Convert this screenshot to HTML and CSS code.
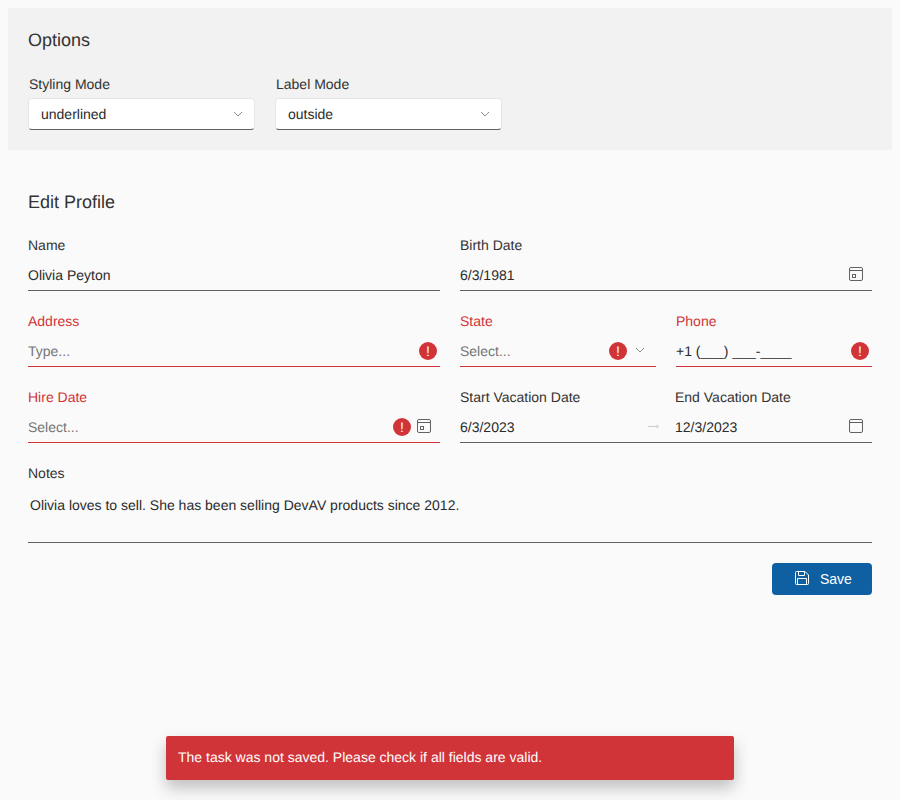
FILE: index.html
```html
<!DOCTYPE html>
<html lang="en">
<head>
    <meta charset="UTF-8">
    <meta name="viewport" content="width=device-width, initial-scale=1.0">
    <title>Edit Profile</title>
    <link rel="stylesheet" href="styles.css">
</head>
<body>
    <svg class="defs" width="0" height="0" aria-hidden="true">
        <symbol id="chevron" viewBox="0 0 12 12"><path d="M2 4 6 8l4-4" fill="none" stroke="currentColor"/></symbol>
        <symbol id="cal-today" viewBox="0 0 16 16"><rect x="1.500" y="1.500" width="13" height="13" rx="1.500" fill="none" stroke="currentColor"/><path d="M1.500 4.500h13" stroke="currentColor"/><rect x="4.500" y="8.500" width="3" height="3" fill="none" stroke="currentColor"/></symbol>
        <symbol id="cal" viewBox="0 0 16 16"><rect x="1.500" y="1.500" width="13" height="13" rx="1.500" fill="none" stroke="currentColor"/><path d="M1.500 4.500h13" stroke="currentColor"/></symbol>
    </svg>

    <section class="options">
        <h2 class="title">Options</h2>
        <div class="options-row">
            <div class="option">
                <div class="option-label">Styling Mode</div>
                <div class="select-box">
                    <span>underlined</span>
                    <svg class="icon-chevron"><use href="#chevron"/></svg>
                </div>
            </div>
            <div class="option">
                <div class="option-label">Label Mode</div>
                <div class="select-box">
                    <span>outside</span>
                    <svg class="icon-chevron"><use href="#chevron"/></svg>
                </div>
            </div>
        </div>
    </section>

    <form class="profile">
        <h2 class="title">Edit Profile</h2>
        <div class="grid">
            <div class="field">
                <div class="label">Name</div>
                <div class="input"><span class="value">Olivia Peyton</span></div>
            </div>
            <div class="field">
                <div class="label">Birth Date</div>
                <div class="input">
                    <span class="value">6/3/1981</span>
                    <svg class="icon-cal"><use href="#cal-today"/></svg>
                </div>
            </div>

            <div class="field invalid">
                <div class="label">Address</div>
                <div class="input">
                    <span class="value placeholder">Type...</span>
                    <span class="error end">!</span>
                </div>
            </div>
            <div class="split">
                <div class="field invalid">
                    <div class="label">State</div>
                    <div class="input">
                        <span class="value placeholder">Select...</span>
                        <span class="error">!</span>
                        <svg class="icon-chevron state-chevron"><use href="#chevron"/></svg>
                    </div>
                </div>
                <div class="field invalid">
                    <div class="label">Phone</div>
                    <div class="input">
                        <span class="value">+1 (___) ___-____</span>
                        <span class="error end">!</span>
                    </div>
                </div>
            </div>

            <div class="field invalid">
                <div class="label">Hire Date</div>
                <div class="input">
                    <span class="value placeholder">Select...</span>
                    <span class="error">!</span>
                    <svg class="icon-cal hire-cal"><use href="#cal-today"/></svg>
                </div>
            </div>
            <div class="range">
                <div class="range-labels">
                    <div class="label">Start Vacation Date</div>
                    <div class="label">End Vacation Date</div>
                </div>
                <div class="input range-input">
                    <span class="value">6/3/2023</span>
                    <svg class="icon-arrow" viewBox="0 0 12 6"><path d="M0 3.500h10M8.500 2 10.500 3.500 8.500 5" fill="none" stroke="currentColor"/></svg>
                    <span class="value">12/3/2023</span>
                    <svg class="icon-cal"><use href="#cal"/></svg>
                </div>
            </div>

            <div class="field wide">
                <div class="label">Notes</div>
                <div class="textarea">Olivia loves to sell. She has been selling DevAV products since 2012.</div>
            </div>
        </div>

        <div class="actions">
            <button type="button" class="save">
                <svg class="icon-save" viewBox="0 0 16 16"><path d="M1.500 2.500a1 1 0 0 1 1-1h8.500l3.500 3.500v8.500a1 1 0 0 1-1 1h-11a1 1 0 0 1-1-1z" fill="none" stroke="currentColor"/><path d="M4.500 1.500v4h6v-4M3.500 14.500v-6h9v6" fill="none" stroke="currentColor"/></svg>
                Save
            </button>
        </div>
    </form>

    <div class="toast">The task was not saved. Please check if all fields are valid.</div>
</body>
</html>
```

FILE: styles.css
```css
* {
    box-sizing: border-box;
}
html, body {
    height: 100%;
}
body {
    margin: 0;
    background: #fafafa;
    color: #2b2b2b;
    font-family: "Liberation Sans", Arial, sans-serif;
    font-size: 14px;
    line-height: 20px;
    text-rendering: geometricPrecision;
}
.defs {
    position: absolute;
}
.title {
    margin: 0;
    font-size: 18px;
    font-weight: 400;
    line-height: 24px;
    color: #333;
}
.options {
    margin: 8px 8px 0;
    height: 142px;
    padding: 20px;
    background: #f2f2f2;
}
.options-row {
    display: flex;
    gap: 20px;
    margin-top: 22px;
}
.option {
    width: 227px;
}
.option-label {
    padding-left: 1px;
    height: 24px;
    line-height: 20px;
    color: #333;
}
.select-box {
    display: flex;
    align-items: center;
    justify-content: space-between;
    height: 32px;
    padding: 0 10px 0 12px;
    background: #fff;
    border: 1px solid #e6e6e6;
    border-bottom-color: #616161;
    border-radius: 4px;
}
.icon-chevron {
    width: 12px;
    height: 12px;
    color: #8a8a8a;
}
.profile {
    padding: 40px 28px 0;
}
.grid {
    display: grid;
    grid-template-columns: 412px 412px;
    column-gap: 20px;
    row-gap: 20px;
    margin-top: 21px;
}
.wide {
    grid-column: 1 / 3;
}
.split {
    display: grid;
    grid-template-columns: 196px 196px;
    column-gap: 20px;
}
.label {
    height: 24px;
    line-height: 20px;
    color: #333;
}
.invalid .label {
    color: #d13438;
}
.input {
    display: flex;
    align-items: center;
    height: 32px;
    border-bottom: 1px solid #616161;
}
.invalid .input {
    border-bottom-color: #d13438;
}
.value {
    flex: 1;
}
.placeholder {
    color: #757575;
}
.error {
    flex: none;
    width: 18px;
    height: 18px;
    margin-top: 1px;
    border-radius: 50%;
    background: #d13438;
    color: #fff;
    font-size: 14px;
    line-height: 18px;
    text-align: center;
}
.error.end {
    margin-right: 3px;
}
.state-chevron {
    margin: -1px 10px 0 7px;
}
.icon-cal {
    flex: none;
    width: 16px;
    height: 16px;
    margin: -1px 8px 0 0;
    color: #616161;
}
.hire-cal {
    margin-left: 5px;
}
.range-labels {
    display: flex;
    gap: 95px;
}
.range-labels .label {
    flex: none;
    white-space: nowrap;
}
.range-labels .label:first-child {
    width: 120px;
}
.range-input .value:first-of-type {
    flex: none;
    width: 188px;
}
.icon-arrow {
    flex: none;
    width: 12px;
    height: 6px;
    margin: -1px 15px 0 0;
    color: #ccc;
}
.textarea {
    height: 56px;
    padding: 8px 2px;
    border-bottom: 1px solid #616161;
}
.actions {
    display: flex;
    justify-content: flex-end;
    margin-top: 20px;
}
.save {
    display: flex;
    align-items: center;
    gap: 10px;
    width: 100px;
    height: 32px;
    padding: 0 0 0 22px;
    border: 0;
    border-radius: 4px;
    background: #0f5fa3;
    color: #fff;
    font: inherit;
}
.icon-save {
    width: 16px;
    height: 16px;
    margin-top: -2px;
}
.toast {
    position: absolute;
    left: 166px;
    top: 736px;
    width: 568px;
    height: 44px;
    padding: 11px 12px;
    border-radius: 2px;
    background: #d13438;
    color: #fff;
    box-shadow: 0 8px 16px rgba(0, 0, 0, 0.24);
}
```
